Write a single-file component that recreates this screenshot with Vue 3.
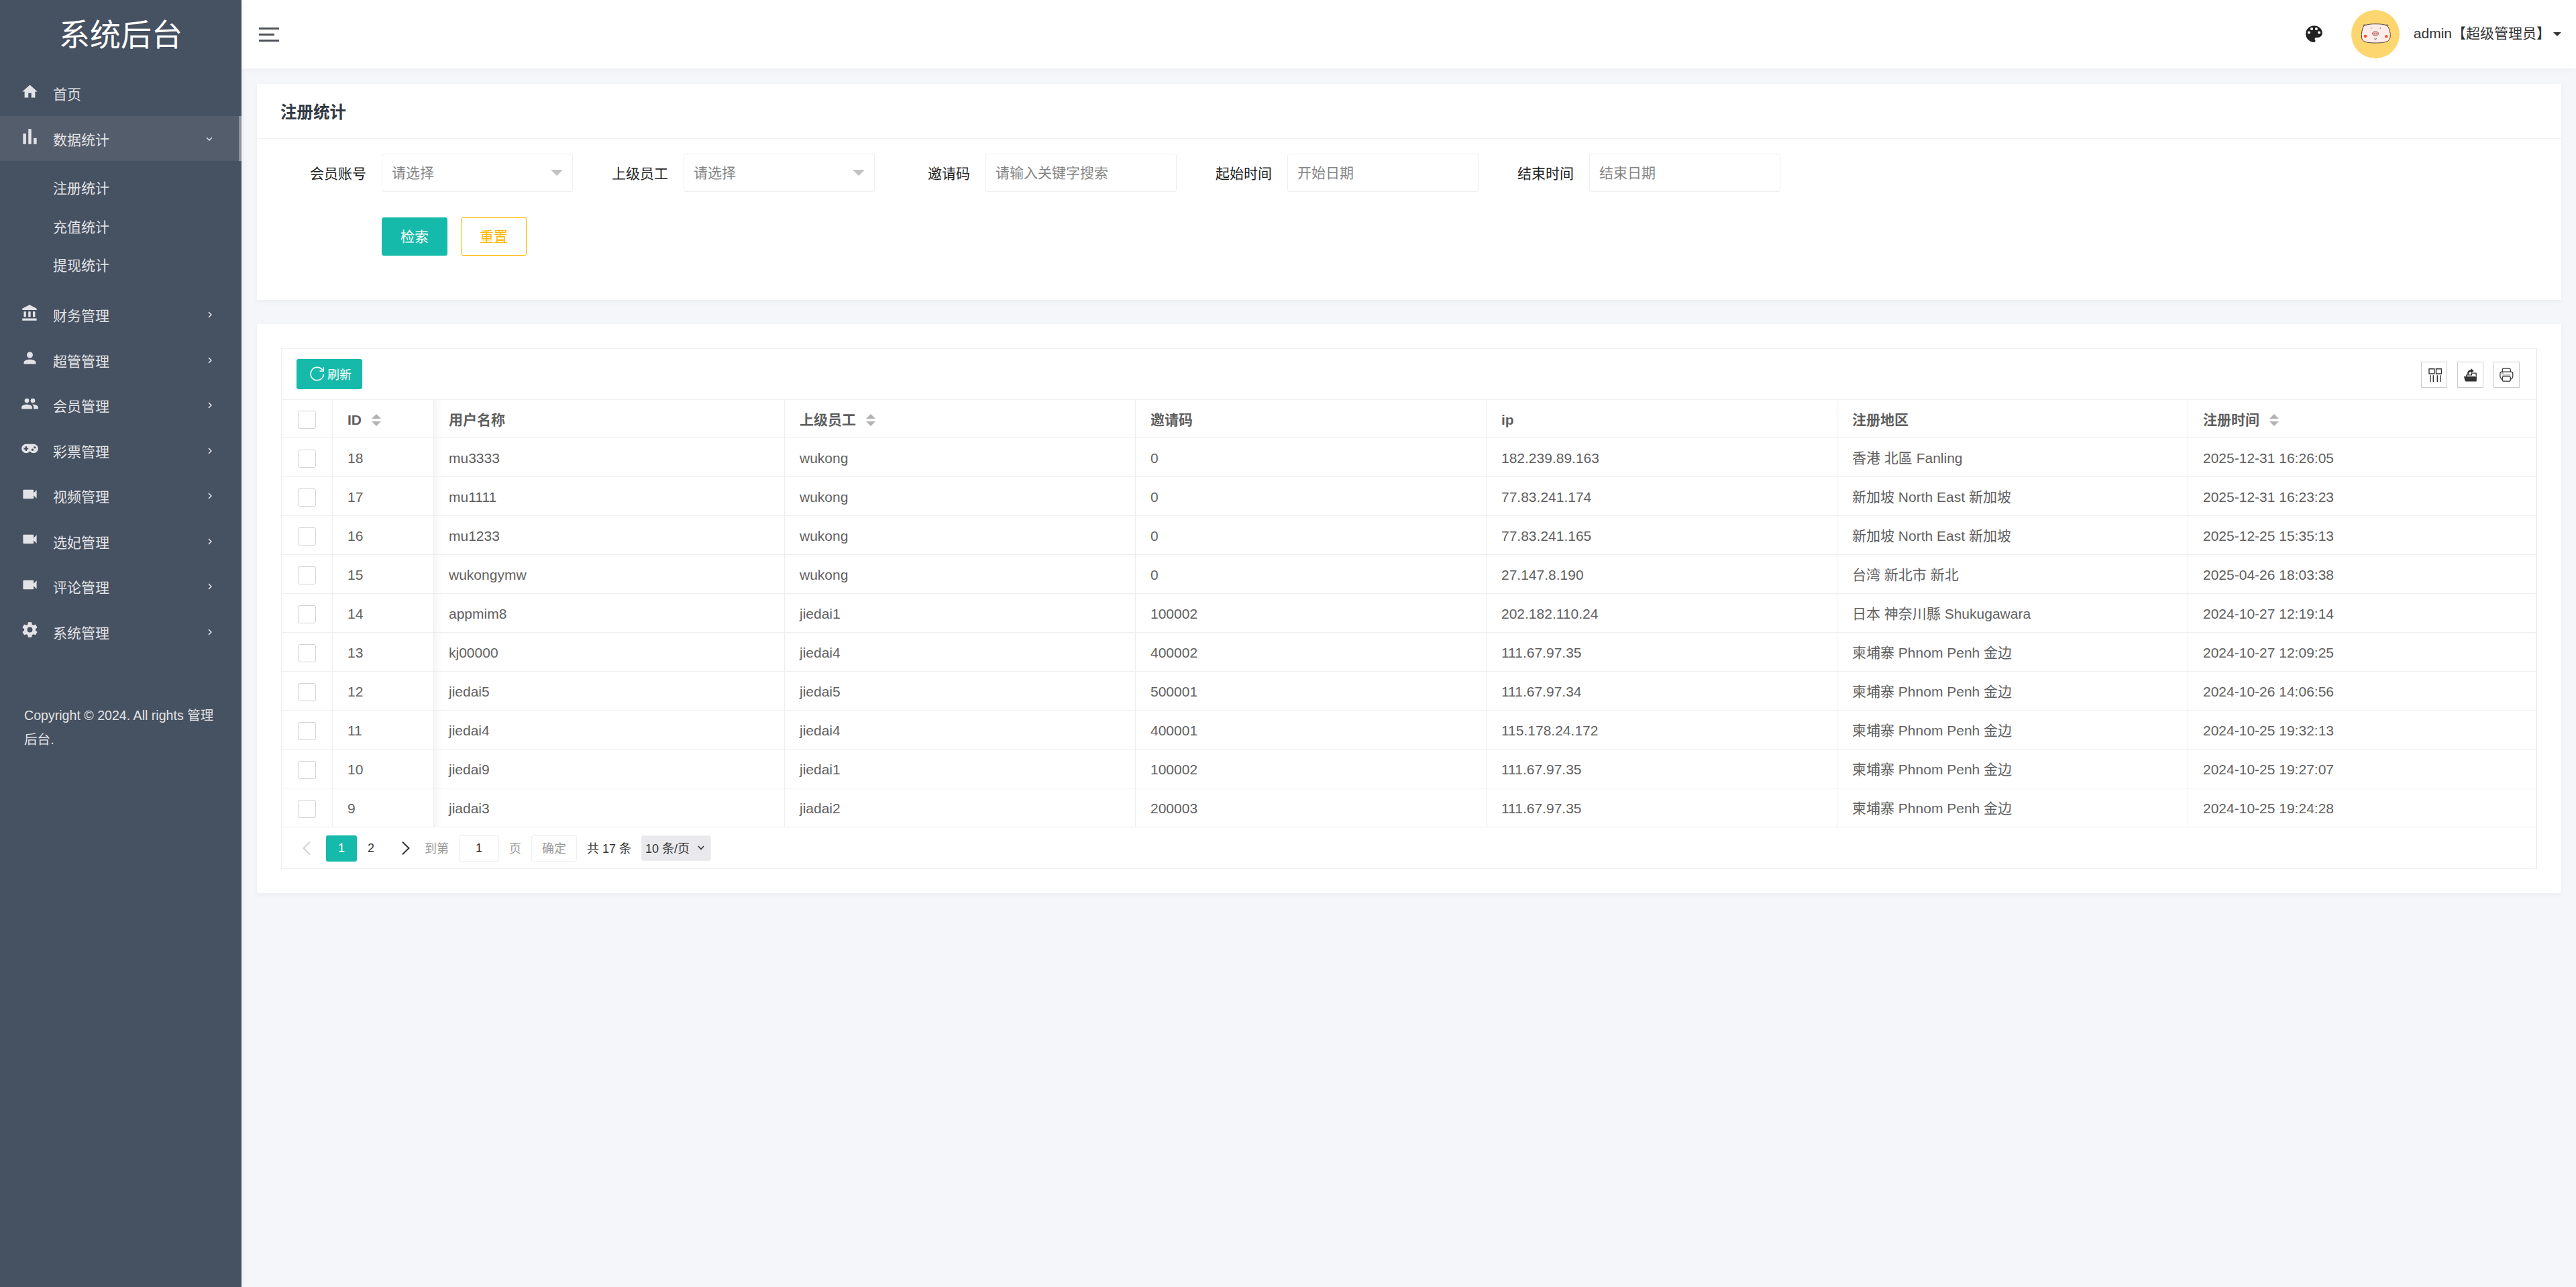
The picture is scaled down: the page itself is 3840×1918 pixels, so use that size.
<template>
  <div class="layout">
    <!-- 左侧菜单 -->
    <aside class="sidebar">
      <div class="logo">系统后台</div>
      <ul class="nav">
        <li v-for="item in menus" :key="item.title">
          <a class="nav-item" :class="{ active: item.title === current }" @click="current = item.title">
            <svg class="nav-icon" viewBox="0 0 24 24"><path :d="icons[item.icon]" /></svg>
            <span class="nav-text">{{ item.title }}</span>
            <svg v-if="item.arrow" class="nav-arrow" viewBox="0 0 24 24">
              <path :d="item.children ? icons.down : icons.right" />
            </svg>
          </a>
          <ul v-if="item.children" class="sub-nav">
            <li v-for="sub in item.children" :key="sub">{{ sub }}</li>
          </ul>
        </li>
      </ul>
      <p class="copyright">Copyright © 2024. All rights 管理后台.</p>
    </aside>

    <div class="main">
      <!-- 顶部栏 -->
      <header class="header">
        <div class="toggler"><i></i><i class="short"></i><i></i></div>
        <div class="header-right">
          <svg class="palette" viewBox="0 0 24 24"><path :d="icons.palette" /></svg>
          <svg class="avatar" viewBox="0 0 72 72">
            <circle cx="36" cy="36" r="36" fill="#fdd670" />
            <g stroke="#54433f" stroke-width="1" fill="#fdecea">
              <path d="M19 25 C16 22 19 21.500 23 22.500 M53 25 C57 22 54 21.500 50 22.500" />
              <path d="M36 20.700 C44 20.700 51 21.500 54 24 C57 28 59 35 58 41 C57 47 50 49 36 49 C22 49 16 47 15.500 41 C15 35 16 28 18.500 24 C22 21.500 29 20.700 36 20.700Z" />
            </g>
            <ellipse cx="36" cy="35" rx="4.500" ry="3" fill="#f3aaa5" stroke="#6a4a48" stroke-width=".7" />
            <circle cx="34.400" cy="35" r=".6" fill="#6a4a48" />
            <circle cx="37.600" cy="35" r=".6" fill="#6a4a48" />
            <circle cx="21" cy="39" r="2.300" fill="#f8552c" />
            <circle cx="52.300" cy="39.300" r="2.300" fill="#f8552c" />
            <path d="M29.500 26v2M43.200 26v2M34.800 41.500q0 3 1.200 3t1.400-3" stroke="#555" stroke-width=".8" fill="none" />
          </svg>
          <span class="user">admin【超级管理员】</span>
          <i class="caret"></i>
        </div>
      </header>

      <div class="content">
        <!-- 检索条件 -->
        <section class="card search-card">
          <h3 class="card-title">注册统计</h3>
          <div class="search-form">
            <div v-for="f in filters" :key="f.label" class="form-item">
              <label>{{ f.label }}</label>
              <div class="field">
                <input v-model="f.value" :placeholder="f.placeholder" :readonly="f.select" />
                <i v-if="f.select" class="select-arrow"></i>
              </div>
            </div>
          </div>
          <div class="form-btns">
            <button class="btn primary">检索</button>
            <button class="btn warm" @click="reset">重置</button>
          </div>
        </section>

        <!-- 数据表格 -->
        <section class="card table-card">
          <div class="table-view">
            <div class="toolbar">
              <button class="btn primary refresh">
                <svg viewBox="0 0 22 22">
                  <path d="M20.500 11A9.700 9.700 0 1 1 18.600 5.300" />
                  <path d="M20.200 1.500V7H14.500" />
                </svg>
                <span>刷新</span>
              </button>
              <div class="tools">
                <span class="tool">
                  <svg viewBox="0 0 23 23">
                    <path d="M4 2.700h7.800v7.300h-7.800zM14.500 2.700h8v7.300h-8zM6 12.300V22M10.300 12.300V22M16.300 12.300V22M20.800 12.300V22" fill="none" stroke="#333" stroke-width="1.400" />
                  </svg>
                </span>
                <span class="tool">
                  <svg viewBox="0 0 24 24">
                    <path d="M6 14.500V12.500H14V9.500H21V21" fill="none" stroke="#333" stroke-width="1.300" />
                    <path d="M2 14.500H19L21.500 16V22.500H5.500Q4 22.500 3.500 20.500Z M7.500 11.500C7 7 9 4.500 13 4.500V2L17.500 6L13 9.500V7.200C10.500 7.200 9.500 9 9.500 11.500Z" fill="#333" />
                  </svg>
                </span>
                <span class="tool">
                  <svg viewBox="0 0 24 24" fill="none" stroke="#333" stroke-width="1.300">
                    <path d="M5.500 7.500V4Q5.500 2.300 7 2.300H16.500Q18 2.300 18 4V7.500" />
                    <path d="M5.500 19H4.500Q2 17 2 14V10Q2 7.500 4.500 7.500H19Q21.700 7.500 21.700 10V14Q21.700 17 18.500 19" />
                    <rect x="5.500" y="14.500" width="12.500" height="7.500" rx="2" />
                    <path d="M5.500 12.500H18M4 9.500h3.500" stroke-width=".7" />
                  </svg>
                </span>
              </div>
            </div>

            <table class="data-table">
              <colgroup>
                <col v-for="(c, i) in columns" :key="i" :style="{ width: c.width + 'px' }" />
              </colgroup>
              <thead>
                <tr>
                  <th v-for="(c, i) in columns" :key="i">
                    <span v-if="i === 0" class="checkbox"></span>
                    <div v-else class="th-cell">
                      {{ c.title }}
                      <span v-if="c.sort" class="sort"><i class="up"></i><i class="down"></i></span>
                    </div>
                  </th>
                </tr>
              </thead>
              <tbody>
                <tr v-for="row in list" :key="row[0]">
                  <td><span class="checkbox"></span></td>
                  <td v-for="(v, i) in row" :key="i">{{ v }}</td>
                </tr>
              </tbody>
            </table>

            <!-- 分页 -->
            <div class="pager">
              <svg class="page-arrow prev" viewBox="0 0 12 20"><path d="M11 .7L1.500 10L11 19.300" /></svg>
              <span class="page-num" :class="{ on: page === 1 }" @click="page = 1">1</span>
              <span class="page-num" :class="{ on: page === 2 }" @click="page = 2">2</span>
              <svg class="page-arrow next" viewBox="0 0 12 20"><path d="M1 .7L10.500 10L1 19.300" /></svg>
              <span class="muted">到第</span>
              <input class="page-input" :value="page" />
              <span class="muted">页</span>
              <button class="page-go">确定</button>
              <span class="total">共 17 条</span>
              <span class="page-size">
                10 条/页
                <svg viewBox="0 0 10 7"><path d="M1 1L5 5.500L9 1" /></svg>
              </span>
            </div>
          </div>
        </section>
      </div>
    </div>
  </div>
</template>

<script setup>
import { ref, reactive } from 'vue'

const current = ref('数据统计')
const page = ref(1)

const icons = {
  home: 'M10,20V14H14V20H19V12H22L12,3L2,12H5V20H10Z',
  chart: 'M3,22V8H7V22H3M10,22V2H14V22H10M17,22V14H21V22H17Z',
  bank: 'M11.5,1L2,6V8H21V6M16,10V17H19V10M2,22H21V19H2M10,10V17H13V10M4,10V17H7V10H4Z',
  account: 'M12,4A4,4 0 0,1 16,8A4,4 0 0,1 12,12A4,4 0 0,1 8,8A4,4 0 0,1 12,4M12,14C16.42,14 20,15.79 20,18V20H4V18C4,15.79 7.58,14 12,14Z',
  group: 'M16,13C15.71,13 15.38,13 15.03,13.05C16.19,13.89 17,15 17,16.5V19H23V16.5C23,14.17 18.33,13 16,13M8,13C5.67,13 1,14.17 1,16.5V19H15V16.5C15,14.17 10.33,13 8,13M8,11A3,3 0 0,0 11,8A3,3 0 0,0 8,5A3,3 0 0,0 5,8A3,3 0 0,0 8,11M16,11A3,3 0 0,0 19,8A3,3 0 0,0 16,5A3,3 0 0,0 13,8A3,3 0 0,0 16,11Z',
  gamepad: 'M7,6H17A6,6 0 0,1 23,12A6,6 0 0,1 17,18C15.22,18 13.63,17.23 12.53,16H11.47C10.37,17.23 8.78,18 7,18A6,6 0 0,1 1,12A6,6 0 0,1 7,6M6,9V11H4V13H6V15H8V13H10V11H8V9H6M15.5,12A1.5,1.5 0 0,0 14,13.5A1.5,1.5 0 0,0 15.5,15A1.5,1.5 0 0,0 17,13.5A1.5,1.5 0 0,0 15.5,12M18.5,9A1.5,1.5 0 0,0 17,10.5A1.5,1.5 0 0,0 18.5,12A1.5,1.5 0 0,0 20,10.5A1.5,1.5 0 0,0 18.5,9Z',
  video: 'M17,10.5V7A1,1 0 0,0 16,6H4A1,1 0 0,0 3,7V17A1,1 0 0,0 4,18H16A1,1 0 0,0 17,17V13.5L21,17.5V6.5L17,10.5Z',
  settings: 'M12,15.5A3.5,3.5 0 0,1 8.5,12A3.5,3.5 0 0,1 12,8.5A3.5,3.5 0 0,1 15.5,12A3.5,3.5 0 0,1 12,15.5M19.43,12.97C19.47,12.65 19.5,12.33 19.5,12C19.5,11.67 19.47,11.34 19.43,11L21.54,9.37C21.73,9.22 21.78,8.95 21.66,8.73L19.66,5.27C19.54,5.05 19.27,4.96 19.05,5.05L16.56,6.05C16.04,5.66 15.5,5.32 14.87,5.07L14.5,2.42C14.46,2.18 14.25,2 14,2H10C9.75,2 9.54,2.18 9.5,2.42L9.13,5.07C8.5,5.32 7.96,5.66 7.44,6.05L4.95,5.05C4.73,4.96 4.46,5.05 4.34,5.27L2.34,8.73C2.21,8.95 2.27,9.22 2.46,9.37L4.57,11C4.53,11.34 4.5,11.67 4.5,12C4.5,12.33 4.53,12.65 4.57,12.97L2.46,14.63C2.27,14.78 2.21,15.05 2.34,15.27L4.34,18.73C4.46,18.95 4.73,19.03 4.95,18.95L7.44,17.94C7.96,18.34 8.5,18.68 9.13,18.93L9.5,21.58C9.54,21.82 9.75,22 10,22H14C14.25,22 14.46,21.82 14.5,21.58L14.87,18.93C15.5,18.67 16.04,18.34 16.56,17.94L19.05,18.95C19.27,19.03 19.54,18.95 19.66,18.73L21.66,15.27C21.78,15.05 21.73,14.78 21.54,14.63L19.43,12.97Z',
  right: 'M8.59,16.58L13.17,12L8.59,7.41L10,6L16,12L10,18L8.59,16.58Z',
  down: 'M7.41,8.58L12,13.17L16.59,8.58L18,10L12,16L6,10L7.41,8.58Z',
  palette: 'M17.5,12A1.5,1.5 0 0,1 16,10.5A1.5,1.5 0 0,1 17.5,9A1.5,1.5 0 0,1 19,10.5A1.5,1.5 0 0,1 17.5,12M14.5,8A1.5,1.5 0 0,1 13,6.5A1.5,1.5 0 0,1 14.5,5A1.5,1.5 0 0,1 16,6.5A1.5,1.5 0 0,1 14.5,8M9.5,8A1.5,1.5 0 0,1 8,6.5A1.5,1.5 0 0,1 9.5,5A1.5,1.5 0 0,1 11,6.5A1.5,1.5 0 0,1 9.5,8M6.5,12A1.5,1.5 0 0,1 5,10.5A1.5,1.5 0 0,1 6.5,9A1.5,1.5 0 0,1 8,10.5A1.5,1.5 0 0,1 6.5,12M12,3A9,9 0 0,0 3,12A9,9 0 0,0 12,21A1.5,1.5 0 0,0 13.5,19.5C13.5,19.11 13.35,18.76 13.11,18.5C12.88,18.23 12.73,17.88 12.73,17.5A1.5,1.5 0 0,1 14.23,16H16A5,5 0 0,0 21,11C21,6.58 16.97,3 12,3Z'
}

const menus = [
  { title: '首页', icon: 'home' },
  { title: '数据统计', icon: 'chart', arrow: true, children: ['注册统计', '充值统计', '提现统计'] },
  { title: '财务管理', icon: 'bank', arrow: true },
  { title: '超管管理', icon: 'account', arrow: true },
  { title: '会员管理', icon: 'group', arrow: true },
  { title: '彩票管理', icon: 'gamepad', arrow: true },
  { title: '视频管理', icon: 'video', arrow: true },
  { title: '选妃管理', icon: 'video', arrow: true },
  { title: '评论管理', icon: 'video', arrow: true },
  { title: '系统管理', icon: 'settings', arrow: true }
]

const filters = reactive([
  { label: '会员账号', placeholder: '请选择', select: true, value: '' },
  { label: '上级员工', placeholder: '请选择', select: true, value: '' },
  { label: '邀请码', placeholder: '请输入关键字搜索', value: '' },
  { label: '起始时间', placeholder: '开始日期', value: '' },
  { label: '结束时间', placeholder: '结束日期', value: '' }
])

function reset() {
  filters.forEach(f => { f.value = '' })
}

const columns = [
  { title: '', width: 76 },
  { title: 'ID', width: 151, sort: true },
  { title: '用户名称', width: 523 },
  { title: '上级员工', width: 523, sort: true },
  { title: '邀请码', width: 523 },
  { title: 'ip', width: 523 },
  { title: '注册地区', width: 523 },
  { title: '注册时间', width: 519, sort: true }
]

const list = [
  [18, 'mu3333', 'wukong', '0', '182.239.89.163', '香港 北區 Fanling', '2025-12-31 16:26:05'],
  [17, 'mu1111', 'wukong', '0', '77.83.241.174', '新加坡 North East 新加坡', '2025-12-31 16:23:23'],
  [16, 'mu1233', 'wukong', '0', '77.83.241.165', '新加坡 North East 新加坡', '2025-12-25 15:35:13'],
  [15, 'wukongymw', 'wukong', '0', '27.147.8.190', '台湾 新北市 新北', '2025-04-26 18:03:38'],
  [14, 'appmim8', 'jiedai1', '100002', '202.182.110.24', '日本 神奈川縣 Shukugawara', '2024-10-27 12:19:14'],
  [13, 'kj00000', 'jiedai4', '400002', '111.67.97.35', '柬埔寨 Phnom Penh 金边', '2024-10-27 12:09:25'],
  [12, 'jiedai5', 'jiedai5', '500001', '111.67.97.34', '柬埔寨 Phnom Penh 金边', '2024-10-26 14:06:56'],
  [11, 'jiedai4', 'jiedai4', '400001', '115.178.24.172', '柬埔寨 Phnom Penh 金边', '2024-10-25 19:32:13'],
  [10, 'jiedai9', 'jiedai1', '100002', '111.67.97.35', '柬埔寨 Phnom Penh 金边', '2024-10-25 19:27:07'],
  [9, 'jiadai3', 'jiadai2', '200003', '111.67.97.35', '柬埔寨 Phnom Penh 金边', '2024-10-25 19:24:28']
]
</script>

<style>
body {
  background: #f5f6fa;
}
</style>

<style scoped>
.layout {
  display: flex;
  min-height: 100vh;
  font-family: "Liberation Sans", "Noto Sans CJK SC", sans-serif;
  font-size: 21px;
  color: #333;
  background: #f5f6fa;
}
.layout * {
  box-sizing: border-box;
}
ul {
  list-style: none;
  margin: 0;
  padding: 0;
}
input,
button {
  font-family: inherit;
  font-size: inherit;
  outline: none;
}

/* 侧边栏 */
.sidebar {
  width: 360px;
  flex-shrink: 0;
  background: #465161;
  color: #e2e3e6;
  position: relative;
  box-shadow: 0 0 10px rgba(0, 0, 0, 0.06);
}
.logo {
  height: 105px;
  line-height: 105px;
  text-align: center;
  font-size: 46px;
  color: #fff;
}
.nav-item {
  display: flex;
  align-items: center;
  height: 67.5px;
  padding: 0 38px 0 31px;
  cursor: pointer;
}
.nav-item.active {
  background: #545d6c;
  border-right: 4px solid #8e929d;
  padding-right: 35px;
}
.nav-icon {
  width: 27px;
  height: 27px;
  margin: 0 21px 5px 0;
  fill: currentColor;
}
.nav-text {
  flex: 1;
  padding-top: 1px;
}
.nav-arrow {
  width: 18px;
  height: 18px;
  margin-top: 1px;
  fill: currentColor;
}
.sub-nav {
  padding: 11.250px 0;
}
.sub-nav li {
  height: 57.5px;
  line-height: 60px;
  padding-left: 79px;
}
.copyright {
  margin: 73px 34px 0 36px;
  font-size: 19.6px;
  line-height: 36px;
  word-break: break-all;
}

.main {
  flex: 1;
  min-width: 0;
}
.header {
  height: 102px;
  display: flex;
  align-items: center;
  justify-content: space-between;
  padding: 0 22px 0 26px;
  background: #fff;
  box-shadow: 0 2px 12px rgba(0, 0, 0, 0.03);
}
.toggler i {
  display: block;
  width: 30px;
  height: 3px;
  margin-bottom: 6px;
  background: #4d5259;
}
.toggler i:last-child {
  margin-bottom: 0;
}
.toggler .short {
  width: 23px;
}
.header-right {
  display: flex;
  align-items: center;
}
.palette {
  width: 33px;
  height: 33px;
  margin: 0 39px 2px 0;
  fill: #222;
}
.avatar {
  width: 72px;
  height: 72px;
  margin-right: 21px;
}
.user {
  padding-bottom: 7px;
}
.caret {
  margin-left: 4px;
  border: 6px solid transparent;
  border-top-color: #333;
  border-bottom: 0;
}

/* 卡片 */
.content {
  padding: 23px 22px 0 23px;
}
.card {
  background: #fff;
  box-shadow: 0 3px 8px rgba(0, 0, 0, 0.04);
}
.search-card {
  height: 322px;
  margin-bottom: 36px;
}
.card-title {
  height: 82px;
  margin: 0;
  padding-left: 35px;
  line-height: 85px;
  font-size: 24.5px;
  font-weight: bold;
  color: #313944;
  border-bottom: 1px solid #f2f2f5;
}
.search-form {
  display: flex;
  padding: 22px 0 0 36px;
}
.form-item {
  display: flex;
  align-items: center;
  width: 450px;
  height: 57px;
}
.form-item label {
  width: 150px;
  padding: 0 23px 2px 0;
  text-align: right;
  color: #222;
}
.field {
  position: relative;
}
.field input {
  display: block;
  width: 285px;
  height: 57px;
  padding: 0 14px;
  border: 1px solid #eee;
  border-radius: 3px;
  color: #333;
}
.field input::placeholder {
  color: #858585;
}
.select-arrow {
  position: absolute;
  right: 15px;
  top: 24px;
  border: 9px solid transparent;
  border-top-color: #c2c2c2;
  border-bottom: 0;
}
.btn {
  width: 98px;
  height: 57px;
  padding: 0 0 4px;
  border: 1px solid #16baaa;
  border-radius: 3px;
  cursor: pointer;
}
.btn.primary {
  background: #16baaa;
  color: #fff;
}
.btn.warm {
  background: #fff;
  color: #ffb800;
  border-color: #ffb800;
}
.form-btns {
  display: flex;
  gap: 20px;
  padding: 38px 0 0 186px;
}

/* 表格 */
.table-card {
  padding: 36px;
  height: 848px;
}
.table-view {
  width: 3363px;
  border: 1px solid #eee;
  border-right-width: 2px;
}
.toolbar {
  display: flex;
  justify-content: space-between;
  height: 76px;
  padding: 15px 24px 0 22px;
  border-bottom: 1px solid #eee;
}
.btn.refresh {
  display: flex;
  align-items: center;
  justify-content: center;
  gap: 4px;
  height: 45px;
  padding: 0 0 2px 4px;
  font-size: 18px;
}
.refresh svg {
  width: 22px;
  height: 22px;
  margin-top: 1px;
  fill: none;
  stroke: #fff;
  stroke-width: 1.6;
}
.tools {
  display: flex;
  gap: 15px;
  padding-top: 4px;
}
.tool {
  display: flex;
  align-items: center;
  justify-content: center;
  width: 39px;
  height: 39px;
  border: 1px solid #ccc;
}
.tool svg {
  width: 23px;
  height: 23px;
}
.data-table {
  width: 100%;
  table-layout: fixed;
  border-collapse: separate;
  border-spacing: 0;
}
.data-table th,
.data-table td {
  height: 58px;
  padding: 3px 0 0 22px;
  text-align: left;
  line-height: 30px;
  color: #5f5f5f;
  border-right: 1px solid #eee;
  border-bottom: 1px solid #eee;
}
.data-table th {
  height: 57px;
}
.data-table th:last-child,
.data-table td:last-child {
  border-right: 0;
}
.data-table th:first-child,
.data-table td:first-child {
  padding-left: 24px;
}
/* 固定列右侧阴影 */
.data-table th:nth-child(3),
.data-table td:nth-child(3) {
  background: linear-gradient(to right, rgba(0, 0, 0, 0.045), rgba(0, 0, 0, 0.015) 7px, transparent 13px);
}
.checkbox {
  display: block;
  width: 27px;
  height: 27px;
  border: 1px solid #d2d2d2;
  border-radius: 3px;
}
.th-cell {
  display: flex;
  align-items: center;
}
.sort {
  display: flex;
  flex-direction: column;
  gap: 4px;
  margin-left: 15px;
}
.sort i {
  border: 7px solid transparent;
}
.sort .up {
  border-top: 0;
  border-bottom-color: #b2b2b2;
}
.sort .down {
  border-bottom: 0;
  border-top-color: #b2b2b2;
}

/* 分页 */
.pager {
  display: flex;
  align-items: center;
  height: 61px;
  padding: 2px 0 0 31px;
  font-size: 18px;
}
.page-arrow {
  width: 12px;
  height: 20px;
  margin-bottom: 2px;
  fill: none;
  stroke: #333;
  stroke-width: 2;
}
.page-arrow.prev {
  stroke: #d2d2d2;
  margin-right: 23px;
}
.page-arrow.next {
  margin-left: 23px;
  margin-right: 22px;
}
.page-num {
  width: 42px;
  height: 39px;
  margin-right: 2px;
  line-height: 38px;
  text-align: center;
  border-radius: 3px;
  cursor: pointer;
}
.page-num.on {
  width: 46px;
  margin-right: 0;
  background: #16baaa;
  color: #fff;
}
.muted,
.total {
  padding-bottom: 4px;
}
.muted {
  color: #999;
}
.page-input {
  width: 60px;
  height: 39px;
  margin: 0 15px;
  padding: 0 0 1px;
  text-align: center;
  border: 1px solid #eee;
  border-radius: 3px;
  color: #333;
}
.page-go {
  width: 68px;
  height: 39px;
  margin: 0 15px;
  padding: 0 0 4px;
  background: #fff;
  border: 1px solid #eee;
  border-radius: 3px;
  color: #999;
}
.page-size {
  display: flex;
  align-items: center;
  justify-content: space-between;
  width: 104px;
  height: 38px;
  margin: 0 0 1px 15px;
  padding: 0 9px 2px 5px;
  background: #e9e9ed;
  border: 1px solid #eee;
  border-radius: 3px;
}
.page-size svg {
  width: 10px;
  height: 7px;
  fill: none;
  stroke: #333;
  stroke-width: 1.6;
}
</style>
